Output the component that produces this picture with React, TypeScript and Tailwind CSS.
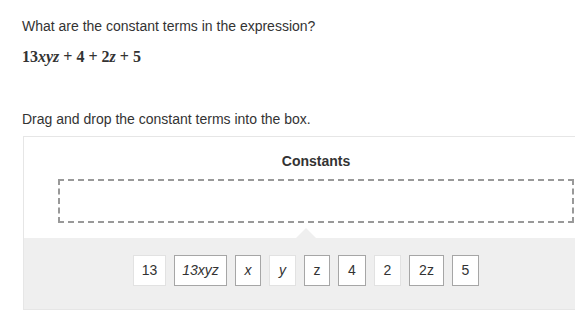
import React from 'react';

type Tile = { label: string; italic?: boolean; faint?: boolean; w: string };

const tiles: Tile[] = [
  { label: '13', faint: true, w: 'w-[33px]' },
  { label: '13xyz', italic: true, w: 'w-[53px]' },
  { label: 'x', italic: true, w: 'w-[26px]' },
  { label: 'y', italic: true, faint: true, w: 'w-[27px]' },
  { label: 'z', w: 'w-[26px]' },
  { label: '4', w: 'w-[28px]' },
  { label: '2', faint: true, w: 'w-[27px]' },
  { label: '2z', w: 'w-[35px]' },
  { label: '5', w: 'w-[27px]' },
];

const Expression: React.FC = () => (
  <div className="mt-[12px] flex items-baseline text-[16px] leading-[22px] font-bold text-[#333] font-['Liberation_Serif','Times_New_Roman',serif]">
    <span>13</span>
    <span className="italic">xyz</span>
    <span className="mx-[4px]">+</span>
    <span>4</span>
    <span className="mx-[4px]">+</span>
    <span>2</span>
    <span className="italic">z</span>
    <span className="mx-[4px]">+</span>
    <span>5</span>
  </div>
);

export default function App() {
  return (
    <div className="w-[575px] h-[310px] overflow-hidden bg-white font-['Liberation_Sans',Arial,sans-serif] text-[#333]">
      <div className="pl-[22px] pt-[18px]">
        <p className="text-[14px] leading-[16px]">What are the constant terms in the expression?</p>
        <Expression />
        <p className="mt-[43px] text-[14px] leading-[16px]">Drag and drop the constant terms into the box.</p>
      </div>

      <div className="ml-[23px] mt-[9px] w-[586px] border border-[#e6e6e6]">
        <div className="pt-[16px] pb-[15px] px-[34px]">
          <h3 className="text-center text-[14px] leading-[16px] font-bold text-[#333]">Constants</h3>
          <div className="mt-[10px] h-[44px] border-2 border-dashed border-[#999]" />
        </div>

        <div className="relative bg-[#efefef] pt-[17px] pb-[23px] pl-[109px]">
          <div className="absolute left-[272px] -top-[10px] w-0 h-0 border-l-[10px] border-r-[10px] border-b-[10px] border-l-transparent border-r-transparent border-b-[#efefef]" />
          <div className="flex gap-[8px]">
            {tiles.map(t => (
              <div
                key={t.label}
                className={`${t.w} h-[31px] flex items-center justify-center bg-white text-[14px] text-[#333] border ${
                  t.faint ? 'border-[#e2e2e2]' : 'border-[#a6a6a6]'
                } ${t.italic ? 'italic' : ''}`}
              >
                {t.label}
              </div>
            ))}
          </div>
        </div>
      </div>
    </div>
  );
}
